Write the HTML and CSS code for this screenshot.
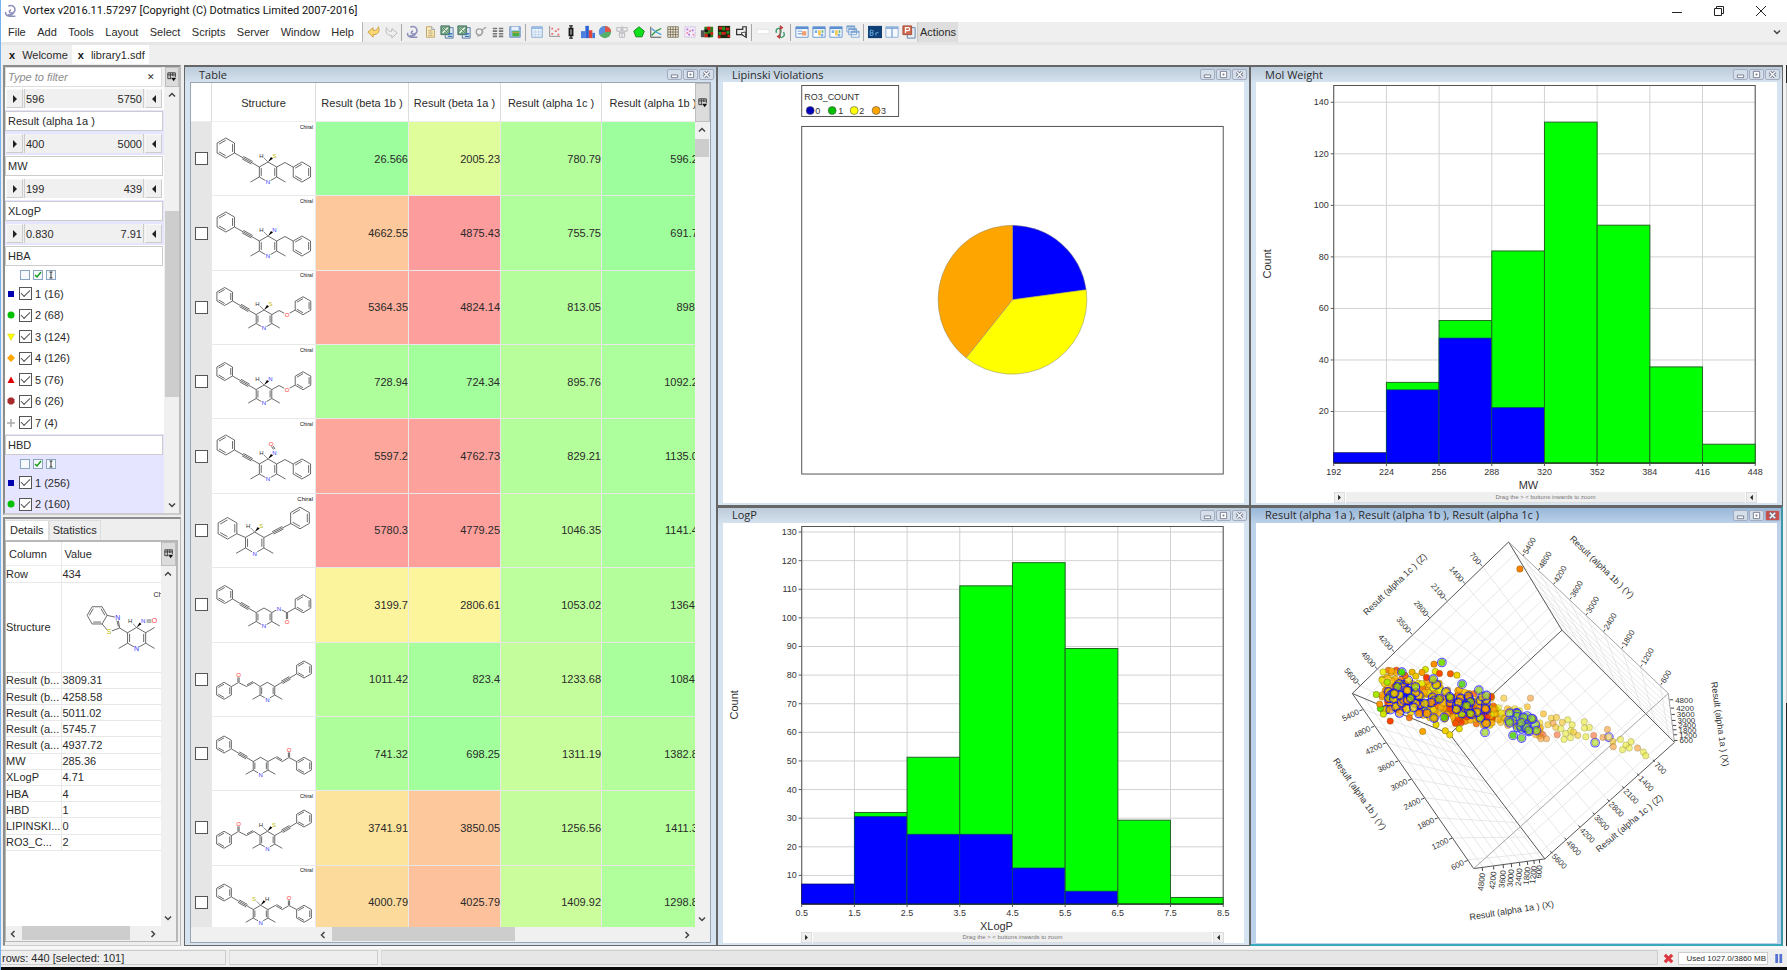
FILE: index.html
```html
<!DOCTYPE html>
<html lang="en">
<head>
<meta charset="utf-8">
<title>Vortex v2016.11.57297</title>
<link rel="stylesheet" href="styles.css">
</head>
<body>
<svg class="sprite" aria-hidden="true">
  <symbol id="i-vortex" viewBox="0 0 16 16"><path d="M5 2.500c4-2 8 .5 7.500 4.500-.3 3-3.500 4-5.500 3-1.500-1-1-3 1-3M2 9c-1 3 1.500 5 4 5h7M4 12c2 1 6 .5 7-2" fill="none" stroke="#8d90bd" stroke-width="1.800"/></symbol>
  <symbol id="i-undo" viewBox="0 0 16 16"><path d="M1 8l6-5v3c3 1 5-1 6-4 2 5 0 9-6 9v3z" fill="#fbd873" stroke="#c8973a"/></symbol>
  <symbol id="i-redo" viewBox="0 0 16 16"><path d="M15 9l-6-5v3c-3 1-5-1-6-4-2 5 0 9 6 9v3z" fill="#eee" stroke="#b5b5b5"/></symbol>
  <symbol id="i-doc" viewBox="0 0 16 16"><path d="M4 2h6l3 3v9H4z" fill="#fbeec2" stroke="#b79a5c"/><path d="M6 6h4M6 8h5M6 10h5M6 12h5" stroke="#c2a768"/><path d="M10 2v3h3" fill="#fff" stroke="#7a93b8"/></symbol>
  <symbol id="i-excel" viewBox="0 0 16 16"><path d="M6 3h9v12H6z" fill="#dfeaf5" stroke="#4b6f9c"/><path d="M1 1h10v10H1z" fill="#6f9f80" stroke="#3f6f5a"/><path d="M3 3l6 6M9 3L3 9" stroke="#fff" stroke-width="1.600"/><path d="M3 3l6 6" stroke="#2f7a37"/><path d="M9 10h5M9 13h5" stroke="#3e78b5" stroke-width="1.500"/></symbol>
  <symbol id="i-key" viewBox="0 0 16 16"><circle cx="6" cy="8" r="3.500" fill="none" stroke="#a0a0a0" stroke-width="1.500"/><path d="M9 6l4-3M12 3h2M4 13l4-2M9 8h2" stroke="#a0a0a0" stroke-width="1.400"/></symbol>
  <symbol id="i-cols" viewBox="0 0 16 16"><path d="M2 4h5M9 4h5M2 7h5M9 7h5M2 10h5M9 10h5M2 13h5M9 13h5" stroke="#777" stroke-width="1.800"/></symbol>
  <symbol id="i-save" viewBox="0 0 16 16"><path d="M2 2h12v12H2z" fill="#9dbfe8" stroke="#6c90c0"/><path d="M4 2h8v4H4z" fill="#e8f0fa"/><path d="M5 7h8v6H5z" fill="#4cae3f"/><path d="M5 8.500h8" stroke="#c9a54a"/></symbol>
  <symbol id="i-sheet" viewBox="0 0 16 16"><path d="M2 2h12v12H2z" fill="#edf4fc" stroke="#7ba2cf"/><path d="M2 3.500h12" stroke="#8db6e4" stroke-width="2"/><path d="M2 8h12M2 11h12M6 5v9M10 5v9" stroke="#bfd3ea"/></symbol>
  <symbol id="i-dots" viewBox="0 0 16 16"><path d="M3 1v12h12" fill="none" stroke="#888"/><path d="M5 3h2v2H5zM9 6h2v2H9zM5 9h2v2H5zM12 4h2v2h-2zM12 10h2v2h-2z" fill="#f06a6a"/></symbol>
  <symbol id="i-box" viewBox="0 0 16 16"><path d="M8 1v3M8 12v3M6 1h4M6 15h4" stroke="#111" stroke-width="1.300"/><path d="M6 4h4v8H6z" fill="#777" stroke="#111" stroke-width="1.500"/></symbol>
  <symbol id="i-hist" viewBox="0 0 16 16"><path d="M0 7h5v8H0z" fill="#4d7fe0"/><path d="M5 1h4v14H5z" fill="#2d64d2"/><path d="M9 6h4v9H9z" fill="#e2453a"/><path d="M13 9h3v6h-3z" fill="#3f78d8"/></symbol>
  <symbol id="i-pie" viewBox="0 0 16 16"><circle cx="8" cy="8" r="7" fill="#56b06a"/><path d="M8 8V1A7 7 0 0 0 2 11.600z" fill="#5b8de0"/><path d="M8 8V1a7 7 0 0 1 7 7z" fill="#e0584a"/></symbol>
  <symbol id="i-net" viewBox="0 0 16 16"><path d="M2 3h5v4H2zM9 3h5v4H9zM5 9h6v5H5zM4 7l3 3M12 7l-3 3M8 1v13" fill="none" stroke="#b4b4bc"/></symbol>
  <symbol id="i-penta" viewBox="0 0 16 16"><path d="M8 2l6 5-2.500 6.500h-7L2 7z" fill="#0fe01c" stroke="#0a7d12"/></symbol>
  <symbol id="i-line" viewBox="0 0 16 16"><path d="M2 2v12h12" fill="none" stroke="#444"/><path d="M3 12l5-5 6-3" fill="none" stroke="#2b9c41" stroke-width="1.500"/><path d="M3 4l5 4 6 3" fill="none" stroke="#4aa3d0" stroke-width="1.500"/></symbol>
  <symbol id="i-grid" viewBox="0 0 16 16"><path d="M2 2h12v12H2z" fill="#f4ecd8"/><path d="M2 2h12v12H2zM2 5h12M2 8h12M2 11h12M5 2v12M8 2v12M11 2v12" fill="none" stroke="#77705c"/></symbol>
  <symbol id="i-cloud" viewBox="0 0 16 16"><path d="M2 2h12v12H2z" fill="#f3eafa" stroke="#c9b8dc" stroke-dasharray="2 1"/><path d="M4 4h2v2H4zM10 5h2v2h-2zM6 10h2v2H6z" fill="#a879d8"/><path d="M7 6h2v2H7zM11 10h2v2h-2zM4 8h2v2H4z" fill="#ee8aa8"/></symbol>
  <symbol id="i-heat1" viewBox="0 0 16 16"><path d="M5 2h10v12H5z" fill="#2f7e1e"/><path d="M8 2h4v4H8zM12 8h3v3h-3zM5 10h4v4H5z" fill="#d32018"/><path d="M5 5h4v3H5zM9 10h3v4H9z" fill="#111"/><path d="M1 6h4v8H1z" fill="#555"/></symbol>
  <symbol id="i-heat2" viewBox="0 0 16 16"><path d="M1 1h14v14H1z" fill="#1d2a10"/><path d="M2 2h4v3H2zM10 3h4v3h-4zM5 8h5v3H5zM12 11h3v3h-3zM1 12h3v3H1z" fill="#d32018"/><path d="M6 2h3v4H6zM11 7h3v3h-3zM2 8h3v3H2z" fill="#2b9a22"/></symbol>
  <symbol id="i-sel" viewBox="0 0 16 16"><path d="M3 5h7V2h4v12l-5-3H3z" fill="none" stroke="#333" stroke-width="1.400"/><path d="M8 9l5 5V8z" fill="#fff" stroke="#333"/></symbol>
  <symbol id="i-blank" viewBox="0 0 16 16"><path d="M1 5h14v5H1z" fill="#fff" stroke="#e0e0e0"/></symbol>
  <symbol id="i-swap" viewBox="0 0 16 16"><path d="M4 9c-2-5 4-7 5-3s-2 4-1 7 7 0 4-5" fill="none" stroke="#3f9e6c" stroke-width="1.600"/><path d="M8 0l4 3-4 3zM8 16l-4-3 4-3z" fill="#c84040"/><path d="M8 1v14" stroke="#855"/></symbol>
  <symbol id="i-win1" viewBox="0 0 16 16"><path d="M1 2h14v12H1z" fill="#fff" stroke="#5b8fd0"/><path d="M1 3.500h14" stroke="#5b8fd0" stroke-width="2.500"/><path d="M3 7h5M3 10h5" stroke="#8ab0e0" stroke-width="1.500"/><path d="M8 7h5v5H8z" fill="#f0a070"/></symbol>
  <symbol id="i-win2" viewBox="0 0 16 16"><path d="M1 2h14v12H1z" fill="#fff" stroke="#5b8fd0"/><path d="M1 3.500h14" stroke="#5b8fd0" stroke-width="2.500"/><path d="M3 6h3v3H3zM10 10h3v3h-3z" fill="#7fb0ea"/><path d="M7 6h3v6H7z" fill="#f3c552"/><path d="M11 6h2v3h-2z" fill="#6ab36a"/></symbol>
  <symbol id="i-casc" viewBox="0 0 16 16"><path d="M1 1h9v7H1zM3 4h9v7H3zM6 7h9v7H6z" fill="#eef4fb" stroke="#7ba2cf"/><path d="M1 2h9M3 5h9M6 8h9" stroke="#7ba2cf" stroke-width="1.500"/></symbol>
  <symbol id="i-br" viewBox="0 0 16 16"><path d="M0 1h16v14H0z" fill="#0e3f75"/><path d="M2.500 6v6h2a1.500 1.500 0 0 0 0-3h-2M2.500 6h2a1.500 1.500 0 0 1 0 3M9 12V8.500M9 10q1-1.500 3-1.500" fill="none" stroke="#6fb0e8"/></symbol>
  <symbol id="i-two" viewBox="0 0 16 16"><path d="M1 2h7v12H1zM8 2h7v12H8z" fill="#f5f9fe" stroke="#84a9d6"/><path d="M1 3.500h14" stroke="#84a9d6" stroke-width="2"/></symbol>
  <symbol id="i-ppt" viewBox="0 0 16 16"><path d="M6 3h9v12H6z" fill="#e7edf5" stroke="#5a78a8"/><path d="M1 1h10v10H1z" fill="#d0694f" stroke="#a04a34"/><path d="M4 9V3h3a1.500 1.500 0 0 1 0 3.500H4" fill="none" stroke="#fff" stroke-width="1.400"/></symbol>
  <symbol id="i-cfg" viewBox="0 0 12 12"><path d="M1 1h9v5M1 1v7h4M1 3.500h9M4 1v7M7 1v4" fill="none" stroke="#222"/><path d="M5 7h6l-3 4z" fill="#111"/></symbol>
  <symbol id="i-up" viewBox="0 0 10 10"><path d="M2 6.500l3-3 3 3" fill="none" stroke="#444" stroke-width="1.500"/></symbol>
  <symbol id="i-down" viewBox="0 0 10 10"><path d="M2 3.500l3 3 3-3" fill="none" stroke="#444" stroke-width="1.500"/></symbol>
  <symbol id="i-left" viewBox="0 0 10 10"><path d="M6.500 2l-3 3 3 3" fill="none" stroke="#444" stroke-width="1.500"/></symbol>
  <symbol id="i-right" viewBox="0 0 10 10"><path d="M3.500 2l3 3-3 3" fill="none" stroke="#444" stroke-width="1.500"/></symbol>
  <symbol id="i-tri-r" viewBox="0 0 10 10"><path d="M3 1l4 4-4 4z" fill="#222"/></symbol>
  <symbol id="i-tri-l" viewBox="0 0 10 10"><path d="M7 1L3 5l4 4z" fill="#222"/></symbol>
  <symbol id="i-wmin" viewBox="0 0 14 10"><path d="M3.500 5.500h7v3h-7z" fill="#fff" stroke="#70778c"/></symbol>
  <symbol id="i-wmax" viewBox="0 0 14 10"><path d="M3.500 1.500h7v7h-7z" fill="#fff" stroke="#70778c"/><path d="M6 4h2v2H6z" fill="#70778c"/></symbol>
  <symbol id="i-wclose" viewBox="0 0 14 10"><path d="M4 2l6 6M10 2L4 8" stroke="#70778c" stroke-width="3.500"/><path d="M4 2l6 6M10 2L4 8" stroke="#fff" stroke-width="1.500"/></symbol>
</svg>

<header class="titlebar">
  <svg class="icon"><use href="#i-vortex"/></svg>
  <h1 class="app-name">Vortex v2016.11.57297 [Copyright (C) Dotmatics Limited 2007-2016]</h1>
  <div class="app-controls">
    <button class="app-btn" aria-label="Minimize"><svg viewBox="0 0 12 12"><path d="M1 7.500h10" stroke="#222"/></svg></button>
    <button class="app-btn" aria-label="Restore"><svg viewBox="0 0 12 12"><path d="M1.500 3.500h7v7h-7zM3.500 3.500v-2h7v7h-2" fill="none" stroke="#222"/></svg></button>
    <button class="app-btn" aria-label="Close"><svg viewBox="0 0 12 12"><path d="M1 1l10 10M11 1L1 11" stroke="#222"/></svg></button>
  </div>
</header>

<div class="menubar">
  <nav class="menus">
    <button>File</button><button>Add</button><button>Tools</button><button>Layout</button><button>Select</button><button>Scripts</button><button>Server</button><button>Window</button><button>Help</button>
  </nav>
  <div class="toolbar" id="toolbar"></div>
  <button class="actions">Actions</button>
  <div class="toolbar-rest"><svg class="mini"><use href="#i-down"/></svg></div>
</div>

<div class="tabs">
  <button class="tab"><b>x</b> Welcome</button>
  <button class="tab tab-on"><b>x</b> library1.sdf</button>
</div>

<main class="workspace">
  <aside class="side">
    <section class="panel filters">
      <div class="filter-top">
        <div class="search"><input type="text" placeholder="Type to filter" aria-label="Type to filter"><button aria-label="Clear filter">✕</button></div>
        <button class="cfg" aria-label="Configure"><svg class="mini12"><use href="#i-cfg"/></svg></button>
      </div>
      <div class="filter-main">
        <div class="filter-list" id="filters"></div>
        <div class="vscroll"><svg class="mini"><use href="#i-up"/></svg><div class="track filter-track"><div class="thumb"></div></div><svg class="mini"><use href="#i-down"/></svg></div>
      </div>
    </section>
    <section class="panel details">
      <div class="dtabs"><button class="dtab dtab-on">Details</button><button class="dtab">Statistics</button></div>
      <div class="dbox">
        <div class="dmain">
          <div class="dwrap">
          <table class="dtable">
            <thead><tr><th>Column</th><th>Value</th></tr></thead>
            <tbody>
              <tr><td>Row</td><td>434</td></tr>
              <tr class="dstruct"><td>Structure</td><td><svg id="detailMol" viewBox="0 0 100 88"></svg></td></tr>
              <tr><td>Result (b...</td><td>3809.31</td></tr>
              <tr><td>Result (b...</td><td>4258.58</td></tr>
              <tr><td>Result (a...</td><td>5011.02</td></tr>
              <tr><td>Result (a...</td><td>5745.7</td></tr>
              <tr><td>Result (a...</td><td>4937.72</td></tr>
              <tr><td>MW</td><td>285.36</td></tr>
              <tr><td>XLogP</td><td>4.71</td></tr>
              <tr><td>HBA</td><td>4</td></tr>
              <tr><td>HBD</td><td>1</td></tr>
              <tr><td>LIPINSKI...</td><td>0</td></tr>
              <tr><td>RO3_C...</td><td>2</td></tr>
            </tbody>
          </table>
          </div>
          <div class="vcol"><button class="cfg dcfg" aria-label="Configure columns"><svg class="mini12"><use href="#i-cfg"/></svg></button>
          <div class="vscroll"><svg class="mini"><use href="#i-up"/></svg><div class="track"></div><svg class="mini"><use href="#i-down"/></svg></div></div>
        </div>
        <div class="hscroll"><svg class="mini"><use href="#i-left"/></svg><div class="track dthumb"><div class="thumb"></div></div><svg class="mini"><use href="#i-right"/></svg></div>
      </div>
    </section>
  </aside>

  <div class="desktop">
    <section class="win win-table">
      <div class="win-title"><h2>Table</h2></div>
      <div class="win-body tbody-box">
        <div class="trow">
          <div class="twrap">
            <table class="grid">
              <colgroup><col class="c0"><col class="c1"><col class="c2"><col class="c3"><col class="c4"><col class="c5"></colgroup>
              <thead><tr><th></th><th>Structure</th><th>Result (beta 1b )</th><th>Result (beta 1a )</th><th>Result (alpha 1c )</th><th>Result (alpha 1b )</th></tr></thead>
              <tbody id="rows"></tbody>
            </table>
          </div>
          <div class="vcol"><button class="cfg tcfg" aria-label="Configure columns"><svg class="mini12"><use href="#i-cfg"/></svg></button>
          <div class="vscroll"><svg class="mini"><use href="#i-up"/></svg><div class="track tthumb"><div class="thumb"></div></div><svg class="mini"><use href="#i-down"/></svg></div></div>
        </div>
        <div class="hscroll thscroll"><svg class="mini"><use href="#i-left"/></svg><div class="track hthumb"><div class="thumb"></div></div><svg class="mini"><use href="#i-right"/></svg></div>
      </div>
    </section>
    <section class="win">
      <div class="win-title"><h2>Lipinski Violations</h2></div>
      <div class="win-body">
        <svg class="chart" viewBox="0 0 521 421">
          <rect x="78.500" y="3.500" width="97" height="31" class="frame"/>
          <text x="81" y="18" class="t9">RO3_COUNT</text>
          <g stroke="#555" stroke-width=".6"><circle cx="87" cy="28.500" r="4" fill="#0000b8"/><circle cx="109" cy="28.500" r="4" fill="#00c000"/><circle cx="131" cy="28.500" r="4" fill="#ff0"/><circle cx="153" cy="28.500" r="4" fill="#ffa500"/></g>
          <g class="t9"><text x="92" y="32">0</text><text x="115" y="32">1</text><text x="136" y="32">2</text><text x="158" y="32">3</text></g>
          <rect x="78.500" y="44.500" width="422" height="348" class="frame"/>
          <g stroke="#8a8a70" stroke-width=".5">
            <path d="M289.500 218V143.500A74.500 74.500 0 0 1 363.300 208z" fill="#00f"/>
            <path d="M289.500 218L363.300 208A74.500 74.500 0 0 1 243 276.200z" fill="#ff0"/>
            <path d="M289.500 218L243 276.200A74.500 74.500 0 0 1 289.500 143.500z" fill="#ffa500"/>
          </g>
        </svg>
      </div>
    </section>
    <section class="win">
      <div class="win-title"><h2>Mol Weight</h2></div>
      <div class="win-body">
        <svg class="chart" id="mw" viewBox="0 0 521 410"></svg>
        <div class="zoombar"><button aria-label="Lower bound"><svg class="mini"><use href="#i-tri-r"/></svg></button><span>Drag the &gt; &lt; buttons inwards to zoom</span><button aria-label="Upper bound"><svg class="mini"><use href="#i-tri-l"/></svg></button></div>
      </div>
    </section>
    <section class="win">
      <div class="win-title"><h2>LogP</h2></div>
      <div class="win-body">
        <svg class="chart" id="logp" viewBox="0 0 521 410"></svg>
        <div class="zoombar"><button aria-label="Lower bound"><svg class="mini"><use href="#i-tri-r"/></svg></button><span>Drag the &gt; &lt; buttons inwards to zoom</span><button aria-label="Upper bound"><svg class="mini"><use href="#i-tri-l"/></svg></button></div>
      </div>
    </section>
    <section class="win win-on">
      <div class="win-title"><h2>Result (alpha 1a ), Result (alpha 1b ), Result (alpha 1c )</h2></div>
      <div class="win-body"><svg class="chart" id="cube" viewBox="0 0 521 421"></svg></div>
    </section>
  </div>
  <div class="edge"></div>
</main>

<footer class="status">
  <span class="cell cell-a">rows: 440 [selected: 101]</span>
  <span class="cell cell-b"></span>
  <span class="cell cell-c"></span>
  <button class="stop" aria-label="Stop"><svg viewBox="0 0 12 12"><path d="M2 2l8 8M10 2L2 10" stroke="#dc3a42" stroke-width="3.500"/></svg></button>
  <span class="mem">Used 1027.0/3860 MB</span>
  <button class="stop" aria-label="Pause"><svg viewBox="0 0 12 12"><path d="M4 1v10M8.500 1v10" stroke="#5673d4" stroke-width="3"/></svg></button>
</footer>
<div class="taskline"></div>
<script src="app.js"></script>
</body>
</html>
```
FILE: styles.css
```css
* { box-sizing: border-box; }
body {
  margin: 0;
  height: 100vh;
  display: flex;
  flex-direction: column;
  overflow: hidden;
  background: #eee;
  border-left: 1px solid #74b2f2;
  font: 11px/14px "Liberation Sans", Arial, sans-serif;
  color: #2a2a2a;
}
button, input { font: inherit; color: inherit; margin: 0; padding: 0; border: 0; background: none; }
h1, h2 { margin: 0; font-weight: 400; }
.sprite { position: absolute; width: 0; height: 0; }
.icon { width: 14px; height: 14px; }
.mini { width: 10px; height: 10px; display: block; flex: none; }
.mini12 { width: 10px; height: 10px; display: block; }

.titlebar { flex: none; height: 22px; background: #fff; display: flex; align-items: center; gap: 5px; padding-left: 3px; }
.app-name { font: 11px/16px Roboto, sans-serif; color: #111; flex: 1; }
.app-controls { display: flex; gap: 30px; padding-right: 20px; }
.app-btn svg { width: 12px; height: 12px; display: block; }

.menubar { flex: none; height: 20px; background: #fff; display: flex; align-items: center; }
.menus { display: flex; justify-content: space-between; width: 361px; padding: 0 8px 0 7px; }
.toolbar { display: flex; align-items: center; height: 20px; background: #efefef; border-left: 1px solid #b5b5b5; padding-left: 2px; }
.toolbar button { width: 17px; height: 18px; display: flex; align-items: center; justify-content: center; }
.sep { width: 1px; height: 17px; margin: 0 2px; background: #a8a8a8; }
.actions { background: #dedede; height: 20px; padding: 0 2px; border-left: 1px solid #c8c8c8; }
.toolbar-rest { flex: 1; height: 20px; background: #efefef; display: flex; align-items: center; justify-content: flex-end; padding-right: 5px; }

.tabs { flex: none; height: 23px; border-top: 3px solid #e6e6e6; background: #efefef; display: flex; align-items: flex-end; padding: 0 2px 1px; }
.tab { height: 19px; padding: 0 4px 0 6px; display: flex; align-items: center; gap: 7px; }
.tab b { color: #111; }
.tab-on { background: #fff; }

.workspace { flex: 1; min-height: 0; display: flex; }
.side { flex: none; width: 183px; display: flex; flex-direction: column; gap: 2px; padding: 0 3px 0 2px; }
.panel { border: 2px solid #8d8d8d; border-right-color: #bbb; border-bottom-color: #ccc; min-height: 0; }
.filters { flex: 449; display: flex; flex-direction: column; background: #f0f0f0; }
.filter-top { display: flex; gap: 3px; height: 20px; flex: none; }
.search { flex: 1; min-width: 0; display: flex; background: #fff; border: 1px solid #ddd; }
.search input { flex: 1; min-width: 0; padding-left: 2px; outline: 0; }
.search input::placeholder { font-style: italic; color: #8c8c8c; }
.search button { flex: none; width: 20px; font-size: 9px; }
.cfg { flex: none; width: 14px; background: #dcdcdc; border: 1px solid #bdbdbd; display: flex; align-items: center; justify-content: center; }
.filter-main { flex: 1; min-height: 0; display: flex; }
.filter-list { flex: 1; min-width: 0; overflow: hidden; background: #fff; }
.vscroll { width: 14px; display: flex; flex-direction: column; align-items: center; padding: 3px 0; background: #f0f0f0; flex: 1; }
.filter-main .vscroll { flex: none; margin-left: 1px; }
.track { flex: 1; display: flex; align-self: stretch; }
.vscroll .track { flex-direction: column; }
.thumb { background: #cdcdcd; }
.filter-track { padding: 111px 0 0; }
.filter-track .thumb { height: 186px; }
.fgroup { padding: 1px 1px 1px 0; background: #fff; }
.fgroup-alt { background: #e5e5ff; }
.fname { display: block; width: 100%; height: 20px; background: #fff; border: 1px solid #ccc; padding: 0 2px; }
.range { display: flex; gap: 1px; margin: 3px 1px 1px; height: 19px; background: #f0f0f0; }
.fgroup:first-child .range { margin-top: 1px; }
.range button { width: 17px; display: flex; align-items: center; justify-content: center; border: 1px solid #f8f8f8; border-right-color: #ccc; border-bottom-color: #ccc; }
.range div { flex: 1; display: flex; justify-content: space-between; align-items: center; border-left: 1px solid #ccc; border-right: 1px solid #ccc; padding: 0 1px; }
.tri { display: flex; gap: 3px; padding: 4px 0 0 15px; height: 17px; }
.tri button { width: 10px; height: 10px; border: 1px solid #8aa5c0; background: #f5f9fc; display: flex; align-items: center; justify-content: center; }
.tri svg { width: 8px; height: 8px; display: block; }
.opt { display: flex; align-items: center; height: 21px; padding-left: 1px; }
.opt:nth-child(even) { height: 22px; }
.opt svg { width: 10px; height: 10px; margin-right: 3px; }
.opt input, .grid input { appearance: none; width: 13px; height: 13px; border: 1px solid #555; background: #fff; display: grid; place-items: center; margin-right: 3px; }
.opt input:checked::after { content: ""; width: 8px; height: 4px; border: solid #555; border-width: 0 0 1px 1px; transform: rotate(-45deg) translate(1px, -1px); }

.details { flex: 429; display: flex; flex-direction: column; border-width: 2px 1px 1px 2px; }
.dtabs { display: flex; height: 21px; align-items: flex-end; }
.dtab { height: 20px; padding: 0 3px; border: 1px solid #ddd; border-bottom: 0; }
.dtab-on { background: #fff; padding: 0 4px; }
.dbox { flex: 1; min-height: 0; display: flex; flex-direction: column; border: 1px solid #b8b8b8; border-width: 2px 2px 1px 1px; background: #fff; margin: 0 2px 3px 0; }
.dmain { flex: 1; min-height: 0; display: flex; }
.dwrap { flex: 1; min-width: 0; overflow: hidden; }
.dtable { border-collapse: collapse; table-layout: fixed; width: 100%; height: 309px; }
.dtable th { font-weight: 400; text-align: left; height: 24px; padding: 0 3px; border-bottom: 1px solid #eee; }
.dtable th:first-child { width: 55px; }
.dtable td { padding: 0; height: 16px; border-bottom: 1px solid #e8e8e8; white-space: nowrap; }
.dtable td + td { padding-left: 1px; }
.dtable td + td, .dtable th + th { border-left: 1px solid #e8e8e8; }
.dtable .dstruct td { height: 89px; }
.dtable .dstruct td + td { padding: 0; }
.dtable svg { display: block; width: 100%; height: 88px; }
.vcol { width: 15px; display: flex; flex-direction: column; align-items: stretch; background: #f0f0f0; flex: none; }
.dcfg { height: 24px; width: 15px; }
.hscroll { flex: none; height: 15px; display: flex; align-items: center; background: #f0f0f0; padding: 0 18px 0 2px; }
.hscroll .track { height: 14px; }
.dthumb { padding-left: 4px; }
.dthumb .thumb { width: 108px; }

.desktop { flex: 1; min-width: 0; display: grid; grid-template-columns: repeat(3, 1fr); grid-template-rows: 1fr 1fr; }
.win { min-width: 0; min-height: 0; display: flex; flex-direction: column; border: 1px solid #666; border-width: 2px 1px 1px; padding: 0 5px 2px; background: linear-gradient(#bccbda, #d6e3f0 16px); }
.win-on { background: linear-gradient(#98b7d8, #bdd2ea 16px); border-bottom: 2px solid #3aa9bd; border-right: 2px solid #3d98a8; padding-bottom: 1px; padding-right: 4px; }
.win-table { grid-row: span 2; }
.win-title { flex: none; height: 15px; display: flex; align-items: center; padding: 0 0 0 9px; }
.win-title h2 { flex: 1; font: 11px/14px "Open Sans", sans-serif; white-space: nowrap; }
.wbtns { display: flex; gap: 1px; margin-right: -3px; }
.wbtns button { width: 15px; height: 11px; border: 1px solid #a4acc0; border-radius: 2px; background: #d5dfea; display: flex; align-items: center; justify-content: center; }
.wbtns svg { width: 13px; height: 9px; }
.win-on .wbtns button:last-child { background: #c9504c; }
.win-body { flex: 1; min-height: 0; display: flex; flex-direction: column; background: #fff; }
.chart { flex: 1; min-height: 0; width: 100%; display: block; font-family: "Liberation Sans", Arial, sans-serif; }
.frame { fill: none; stroke: #555; }
.t9 { font-size: 9px; fill: #333; }
.t11 { font-size: 11px; fill: #333; }
.t8 { font-size: 8px; fill: #333; }
.zoombar { flex: none; height: 11px; margin: 0 20px 0 78px; display: flex; gap: 1px; }
.zoombar button { width: 11px; background: #f0f0f0; border: 1px solid #ddd; display: flex; align-items: center; justify-content: center; }
.zoombar button svg { width: 7px; height: 7px; }
.zoombar span { flex: 1; background: #efefef; border-bottom: 1px solid #ddd; text-align: center; font-size: 6px; line-height: 11px; color: #777; }

.tbody-box { border: 1px solid #9aa5b2; }
.trow { flex: 1; min-height: 0; display: flex; }
.twrap { flex: 1; min-width: 0; overflow: hidden; background: #fff; }
.grid { border-collapse: separate; border-spacing: 0; table-layout: fixed; width: 514px; height: 857px; }
.c0 { width: 21px; } .c1 { width: 104px; } .c2 { width: 93px; } .c3 { width: 92px; } .c4 { width: 101px; } .c5 { width: 103px; }
.grid th { height: 39px; font-weight: 400; padding: 2px 0 0; border-right: 1px solid #ddd; border-bottom: 1px solid #eee; white-space: nowrap; }
.grid td { padding: 0; border-right: 1px solid #e8e8e8; border-bottom: 1px solid #e8e8e8; text-align: right; }
.grid td:first-child { background: #e6e6e6; }
.grid input { margin: 0 0 0 4px; }
.grid svg { display: block; width: 103px; height: 72px; }
.tcfg { height: 39px; width: 15px; }
.tthumb { padding-top: 4px; }
.tthumb .thumb { height: 18px; }
.thscroll { padding: 0 18px 0 127px; }
.hthumb { padding-left: 4px; }
.hthumb .thumb { width: 183px; }
.edge { width: 4px; flex: none; background: linear-gradient(#222 18px, #ccc 18px 638px, #222 638px) right / 1px 100% no-repeat #f2f2f2; }

.status { flex: none; height: 21px; display: flex; align-items: flex-end; gap: 3px; padding: 0 2px 2px 0; border-top: 3px solid #f8f8f8; }
.cell { height: 15px; border: 1px solid #ccc; background: #eee; border-left-color: #ddd; }
.cell-a { width: 225px; padding-left: 1px; line-height: 14px; border-left: 0; }
.cell-b { width: 149px; }
.cell-c { flex: 1; background: #e6e6e6; }
.stop { width: 14px; height: 14px; }
.stop svg { width: 11px; height: 11px; display: block; margin: auto; }
.mem { width: 90px; height: 13px; background: #fff; border: 1px solid #ccc; font-size: 8px; line-height: 12px; text-align: right; padding-right: 1px; }
.taskline { flex: none; height: 3px; background: #0a0a0a; }
```
FILE: app.js
```js
const $ = id => document.getElementById(id);

/* Toolbar */
const tools = ["undo", "redo", "|", "vortex", "doc", "excel", "excel", "key", "cols", "save", "|", "sheet", "dots", "box", "hist", "pie", "net", "penta", "line", "grid", "cloud", "heat1", "heat2", "sel", "|", "blank", "swap", "|", "win1", "win2", "win2", "casc", "|", "br", "two", "ppt"];
$("toolbar").innerHTML = tools.map(t => t === "|" ? '<span class="sep"></span>'
  : `<button aria-label="${t}"><svg class="icon"><use href="#i-${t}"/></svg></button>`).join("");

/* Window buttons */
document.querySelectorAll(".win-title").forEach(t => t.insertAdjacentHTML("beforeend",
  '<div class="wbtns">' + [["Minimize", "wmin"], ["Maximize", "wmax"], ["Close", "wclose"]]
    .map(([l, i]) => `<button aria-label="${l}"><svg><use href="#i-${i}"/></svg></button>`).join("") + "</div>"));

/* Filters */
const marks = [
  '<path d="M2 2h6v6H2z" fill="#0000b0"/>', '<circle cx="5" cy="5" r="3.500" fill="#00c000"/>',
  '<path d="M1.500 2h7L5 8.500z" fill="#ff0" stroke="#bb0" stroke-width=".4"/>', '<path d="M5 1l4 4-4 4-4-4z" fill="#ffa500"/>',
  '<path d="M1.500 8h7L5 1.500z" fill="#e00000"/>', '<path d="M3.500 1.500h3l2 2v3l-2 2h-3l-2-2v-3z" fill="#a52a2a"/>', '<path d="M5 1v8M1 5h8" stroke="#aaa" stroke-width="1.500"/>'];
const filters = [
  { range: ["596", "5750"] },
  { name: "Result (alpha 1a )", range: ["400", "5000"], alt: 1 },
  { name: "MW", range: ["199", "439"] },
  { name: "XLogP", range: ["0.830", "7.91"], alt: 1 },
  { name: "HBA", opts: ["1 (16)", "2 (68)", "3 (124)", "4 (126)", "5 (76)", "6 (26)", "7 (4)"] },
  { name: "HBD", opts: ["1 (256)", "2 (160)"], alt: 1 }];
$("filters").innerHTML = filters.map(f => `<div class="fgroup${f.alt ? " fgroup-alt" : ""}">` +
  (f.name ? `<input class="fname" aria-label="Filter name" value="${f.name}">` : "") +
  (f.range ? `<div class="range"><button aria-label="Lower"><svg class="mini"><use href="#i-tri-r"/></svg></button><div><span>${f.range[0]}</span><span>${f.range[1]}</span></div><button aria-label="Upper"><svg class="mini"><use href="#i-tri-l"/></svg></button></div>` : "") +
  (f.opts ? '<div class="tri"><button aria-label="None"></button><button aria-label="All"><svg viewBox="0 0 8 8"><path d="M1 4l2 2 4-5" fill="none" stroke="#1a9a1a" stroke-width="1.500"/></svg></button><button aria-label="Invert"><svg viewBox="0 0 8 8"><path d="M4 1v6M2.500 1h3M2.500 7h3" stroke="#333"/></svg></button></div><div class="opts">' +
    f.opts.map((o, i) => `<label class="opt"><svg viewBox="0 0 10 10">${marks[i]}</svg><input type="checkbox" checked>${o}</label>`).join("") + "</div>" : "") + "</div>").join("");

/* Molecules */
const ln = (a, b, w = 0.8) => `<path d="M${a}L${b}" stroke="#444" stroke-width="${w}"/>`;
const atom = (x, y, s, size = 6) => `<circle cx="${x}" cy="${y}" r="3" fill="#fff"/><text x="${x}" y="${y + 2.2}" font-size="${size}" text-anchor="middle" fill="${{ N: "#33f", O: "#f33", S: "#bb0", H: "#333" }[s]}">${s}</text>`;
const verts = (cx, cy, r, off = -90) => [0, 1, 2, 3, 4, 5].map(i => {
  const a = (off + i * 60) * Math.PI / 180;
  return [cx + r * Math.cos(a), cy + r * Math.sin(a)];
});
const ring = (cx, cy, r, dbl = [1, 3, 5], off = -90) => {
  const v = verts(cx, cy, r, off), u = verts(cx, cy, r * 0.78, off);
  return v.map((p, i) => ln(p, v[(i + 1) % 6])).join("") + dbl.map(i => ln(u[i], u[(i + 1) % 6])).join("");
};
const triple = (a, b) => {
  const m = t => [a[0] + (b[0] - a[0]) * t, a[1] + (b[1] - a[1]) * t];
  const l = Math.hypot(b[0] - a[0], b[1] - a[1]), nx = -(b[1] - a[1]) / l * 1.4, ny = (b[0] - a[0]) / l * 1.4;
  const p = m(0.33), q = m(0.7);
  return ln(a, b) + ln([p[0] + nx, p[1] + ny], [q[0] + nx, q[1] + ny]) + ln([p[0] - nx, p[1] - ny], [q[0] - nx, q[1] - ny]);
};
const core = (x, y, r) => ring(x, y, r, [1, 4]) + ln([x - r * 0.87, y + r / 2], [x - r * 1.75, y + r]) +
  ln([x + r * 0.87, y + r / 2], [x + r * 1.75, y + r]) + atom(x, y + r, "N");
const stereo = (x, y, l, r) => ln([x, y], [x - 4, y - 4], 0.6) + `<path d="M${x} ${y}l3-5 2 1.500z" fill="#000"/>` + atom(x - 6.5, y - 6.5, l) + atom(x + 6.5, y - 6.5, r);
const chiral = (s = 5) => `<text x="101" y="${s + 1}" font-size="${s}" text-anchor="end" fill="#111">Chiral</text>`;
const benzyl = x => chiral() + ring(13.8, 25, 10) + triple([22.5, 30], [47.5, 44]) + core(56, 49, 10) +
  ln([64.7, 44], [73, 39.500]) + ln([73, 39.500], [81, 44]) + ring(89.9, 49, 10) + stereo(56, 39, "H", x);
const ether = x => chiral() + ring(12.7, 25.500, 9) + triple([20.5, 30], [44, 43.500]) + core(52, 48, 9) +
  ln([60, 43.500], [67, 39.500]) + ln([67, 39.500], [75, 43.700]) + ln([75, 43.700], [83, 39.200]) + atom(75, 43.7, "O") + ring(91, 34.7, 9) + stereo(52, 39, "H", x);
const enoneL = ring(12, 47.8, 8.5) + ln([19.5, 43.500], [26.5, 39.500]) + ln([25.9, 39], [25.9, 33]) + ln([27.1, 39], [27.1, 33]) + atom(26.5, 31.5, "O") +
  ln([26.5, 39.500], [34.4, 43.500]) + ln([34.4, 43.500], [42, 39.500]) + ln([35, 41.800], [41, 38.500]) + ln([42, 39.500], [48, 43.500]) +
  core(55.4, 47.8, 8.5) + triple([62.8, 43.5], [84.5, 31]) + ring(92, 26.5, 8.5);
const enoneR = ring(12, 26.5, 8.5) + triple([19.5, 31], [41.3, 43.5]) + core(48.6, 47.8, 8.5) + ln([56, 43.500], [63.4, 39.500]) +
  ln([63.4, 39.500], [70.2, 43.500]) + ln([64.5, 38.500], [70, 41.800]) + ln([70.2, 43.500], [77, 39.500]) + ln([76.4, 39], [76.4, 33]) + ln([77.6, 39], [77.6, 33]) +
  atom(77, 31.5, "O") + ln([77, 39.500], [84.5, 43.500]) + ring(92, 47.8, 8.5);
const mols = [
  benzyl("S"), benzyl("N"), ether("S"), ether("N"),
  benzyl("N") + ln([61.5, 29.500], [59.2, 26]) + ln([63, 29], [60.7, 25.500]) + atom(59, 23.5, "O"),
  chiral(6) + ring(15.5, 34.3, 10.8) + ln([24.8, 39.700], [33.5, 43.500]) + core(42.7, 48.7, 10.6) + triple([52, 43.5], [79, 29.5]) + ring(88, 24, 10.8) + stereo(42.7, 38, "H", "S"),
  ring(12.7, 25.5, 9) + triple([20.5, 30], [44, 43.5]) + core(52, 48, 9) + ln([60, 43.500], [67, 39.500]) + ln([67, 39.500], [75, 43.700]) + atom(67, 39.5, "N") +
    ln([74.4, 44], [74.4, 51]) + ln([75.6, 44], [75.6, 51]) + atom(75, 53, "O") + ln([75, 43.700], [83, 39.200]) + ring(91, 34.7, 9),
  enoneL, enoneR, chiral() + enoneL + stereo(55.4, 39.3, "H", "S"), chiral() + enoneR + stereo(48.6, 39.3, "S", "H")];

/* Data rows: value and heat colour for each result column */
const rows = [
  ["26.566", "#9cfe9c", "2005.23", "#e0fd9c", "780.79", "#b4fe9c", "596.25", "#9cfe9c"],
  ["4662.55", "#fdc89c", "4875.43", "#fd9c9c", "755.75", "#b0fe9c", "691.72", "#9ffe9c"],
  ["5364.35", "#fdae9c", "4824.14", "#fd9f9c", "813.05", "#b4fe9c", "898.5", "#a4fe9c"],
  ["728.94", "#aeff9c", "724.34", "#a2ff9c", "895.76", "#b8ff9c", "1092.25", "#acff9c"],
  ["5597.2", "#fda69c", "4762.73", "#fda19c", "829.21", "#b4ff9c", "1135.05", "#acff9c"],
  ["5780.3", "#fd9f9c", "4779.25", "#fda09c", "1046.35", "#bcff9c", "1141.45", "#acff9c"],
  ["3199.7", "#fcf49c", "2806.61", "#fcf59c", "1053.02", "#bcff9c", "1364.5", "#b4ff9c"],
  ["1011.42", "#b8ff9c", "823.4", "#a6ff9c", "1233.68", "#c4fe9c", "1084.5", "#a9ff9c"],
  ["741.32", "#aeff9c", "698.25", "#a1ff9c", "1311.19", "#c8fe9c", "1382.85", "#b4ff9c"],
  ["3741.91", "#fde49c", "3850.05", "#fdc89c", "1256.56", "#c4fe9c", "1411.35", "#b6ff9c"],
  ["4000.79", "#fbda9c", "4025.79", "#fdc29c", "1409.92", "#ccfd9c", "1298.85", "#b0ff9c"]];
$("rows").innerHTML = rows.map((r, i) => `<tr><td><input type="checkbox" aria-label="Select row ${i + 1}"></td><td><svg viewBox="0 0 103 72">${mols[i]}</svg></td>` +
  [0, 2, 4, 6].map(k => `<td style="background:${r[k + 1]}">${r[k]}</td>`).join("") + "</tr>").join("");

$("detailMol").innerHTML = ring(35.3, 32.3, 10, [1, 3, 5], 0) + ln([45.3, 32.300], [56, 34.700]) + ln([40.3, 41], [47.3, 49]) +
  ln([47.3, 49], [58, 45]) + ln([58, 45], [56, 34.700]) + ln([56.7, 43.500], [54.8, 36]) + atom(56, 34.7, "N", 7) + atom(47.3, 49, "S", 7) +
  ln([58, 45], [66, 50]) + ring(75, 55, 10.5, [1, 4]) + ln([66, 60.200], [57, 65.500]) + ln([84, 60.200], [93, 65.500]) + ln([84, 49.800], [93, 44.500]) + atom(75, 65.5, "N", 7) +
  stereo(75, 44.5, "H", "N") + ln([85, 37], [90, 37]) + ln([85, 39], [90, 39]) + atom(93, 38, "O", 7) + '<text x="92" y="14" font-size="7" fill="#222">Chiral</text>';

/* Histograms */
function histogram(id, o) {
  const x0 = o.x, w = 422, top = 3.5, base = 381.5, step = w / o.bars.length, y = v => base - v * o.unit;
  let s = "";
  o.yTicks.forEach(v => s += `<path d="M${x0} ${y(v)}h${w}" stroke="#d2d2d2"/>`);
  o.xTicks.forEach((v, i) => s += `<path d="M${x0 + i * step} ${top}V${base}" stroke="#d2d2d2"/>`);
  s += `<rect x="${x0}" y="${top}" width="${w}" height="${base - top}" class="frame"/>`;
  o.bars.forEach(([g, b], i) => {
    const x = x0 + i * step;
    if (g) s += `<rect x="${x}" y="${y(g)}" width="${step}" height="${base - y(g)}" fill="#0f0" stroke="#262"/>`;
    if (b) s += `<rect x="${x}" y="${y(b)}" width="${step}" height="${base - y(b)}" fill="#00f" stroke="${g ? "#046" : "#005"}" stroke-width=".7"/>`;
  });
  s += `<path d="M${x0} ${base}h${w}" stroke="#222"/>`;
  o.yTicks.forEach(v => s += `<path d="M${x0 - 3} ${y(v)}h3" stroke="#555"/><text class="t9" x="${x0 - 5}" y="${y(v) + 3}" text-anchor="end">${v}</text>`);
  o.xTicks.forEach((v, i) => s += `<path d="M${x0 + i * step} ${base}v3" stroke="#555"/><text class="t9" x="${x0 + i * step}" y="393" text-anchor="middle">${v}</text>`);
  s += `<text class="t11" x="${x0 + 195}" y="408" text-anchor="middle">${o.label}</text>`;
  s += '<text class="t11" transform="translate(15 182) rotate(-90)" text-anchor="middle">Count</text>';
  $(id).innerHTML = s;
}
const steps = (from, to, by) => Array.from({ length: Math.round((to - from) / by) + 1 }, (_, i) => from + i * by);
histogram("mw", { x: 77.5, unit: 2.58, label: "MW", yTicks: steps(20, 140, 20), xTicks: steps(192, 448, 32),
  bars: [[0, 4], [31.300, 28.400], [55.300, 48.500], [82.300, 21.500], [132.300, 0], [92.300, 0], [37.300, 0], [7.300, 0]] });
histogram("logp", { x: 78.5, unit: 2.865, label: "XLogP", yTicks: steps(10, 130, 10), xTicks: steps(0.5, 8.5, 1),
  bars: [[0, 7], [32, 30.600], [51.300, 24.400], [111.200, 24.400], [119.300, 12.600], [89.300, 4.500], [29.300, 0], [2.300, 0]] });

/* 3D scatter: model coordinates are projected to chart pixels by P */
const P = (x, y) => [x / 2.92 - 6, y / 3 - 22];
const V = { A: [755, 123], B: [298, 578], C: [911, 388], D: [583, 700], E: [1240, 725], F: [653, 1104], G: [861, 1075], H: [1222, 578] };
const at = (a, b, t) => [V[a][0] + (V[b][0] - V[a][0]) * t, V[a][1] + (V[b][1] - V[a][1]) * t];
const edge = (a, b, c) => `<path d="M${P(...V[a])}L${P(...V[b])}" stroke="${c}"/>`;
const tz = [0.165, 0.28, 0.395, 0.505, 0.617, 0.732, 0.84, 0.95];
const ty = [0.09, 0.185, 0.28, 0.38, 0.485, 0.595, 0.71, 0.825, 0.95];
const tx = [0.13, 0.28, 0.42, 0.54, 0.65, 0.75, 0.85, 0.95];
const mesh = (a, b, c, d, ts) => ts.map(t => `<path d="M${P(...at(a, b, t))}L${P(...at(c, d, t))}" stroke="#e2e2e2" stroke-width=".8"/>`).join("");
let cube = mesh("A", "B", "C", "D", tz) + mesh("A", "C", "B", "D", tx) + mesh("C", "D", "E", "G", tz) + mesh("C", "E", "D", "G", ty) +
  mesh("A", "H", "C", "E", ty) + mesh("A", "C", "H", "E", tx) + mesh("B", "F", "D", "G", ty) + mesh("B", "D", "F", "G", tx);
cube += ["AB", "AC", "CD", "BD", "CE", "DG", "BF", "FG", "GE"].map(e => edge(e[0], e[1], "#555")).join("") +
  ["AH", "HE", "HF"].map(e => edge(e[0], e[1], "#a5a5a5")).join("");
const label = (x, y, rot, txt, anchor, cls = "t8") => `<text class="${cls}" text-anchor="${anchor}" transform="translate(${P(x, y)}) rotate(${rot})" y="3">${txt}</text>`;
const axis = (pts, from, by, rot, anchor, dx, dy, mx, my) => pts.map(([x, y], i) =>
  `<path d="M${P(x, y)}L${P(x + mx, y + my)}" stroke="#444"/>` + label(x + dx, y + dy, rot, from + by * i, anchor)).join("");
cube += axis([[678, 195], [627, 247], [574, 298], [524, 350], [473, 400], [420, 452], [370, 503], [320, 553]], 700, 700, 50, "end", -7, -8, -6, -6);
cube += axis([[1183, 783], [1137, 825], [1093, 863], [1050, 902], [1007, 942], [965, 980], [925, 1018], [883, 1058]], 700, 700, 46, "start", 3, 4, -6, -6);
cube += axis([[797, 165], [843, 207], [887, 250], [935, 295], [982, 342], [1033, 392], [1086, 443], [1142, 497], [1200, 552]], 5400, -600, -60, "start", 5, -8, 4, -6);
cube += axis([[328, 627], [362, 677], [396, 727], [432, 781], [470, 836], [508, 893], [548, 952], [590, 1013], [635, 1080]], 5400, -600, -26, "end", -12, 4, -9, 3);
cube += axis([[1226, 597], [1229, 622], [1231, 641], [1233, 659], [1235, 674], [1236, 687], [1238, 702], [1239, 719]], 4800, -600, 0, "start", 16, 0, 10, 0);
cube += axis([[678, 1101], [711, 1097], [739, 1093], [763, 1090], [787, 1087], [810, 1083], [829, 1080], [845, 1078]], 4800, -600, -84, "end", 0, 16, 1, 10);
cube += label(423, 250, -44, "Result (alpha 1c ) (Z)", "middle", "t9") + label(1028, 198, 44, "Result (alpha 1b ) (Y)", "middle", "t9") +
  label(1373, 670, 82, "Result (alpha 1a ) (X)", "middle", "t9") + label(1108, 968, -40, "Result (alpha 1c ) (Z)", "middle", "t9") +
  label(320, 880, 55, "Result (alpha 1b ) (Y)", "middle", "t9") + label(764, 1230, -9, "Result (alpha 1a ) (X)", "middle", "t9");

let seed = 7;
const rnd = () => (seed = (seed * 16807) % 2147483647) / 2147483647;
const dot = (x, y, fill, o = 1, ringed = 0) => {
  const [px, py] = P(x, y);
  return (ringed ? `<circle cx="${px}" cy="${py}" r="4.300" fill="none" stroke="${ringed}" stroke-width="1.100" opacity=".85"/>` : "") +
    `<circle cx="${px}" cy="${py}" r="3.200" fill="${fill}" stroke="#665500" stroke-width=".4" opacity="${o}"/>`;
};
const pal = ["#ffb400", "#ffa000", "#f0d800", "#e8f000", "#ffb000", "#ff6a00", "#ff3a00", "#ffc400"];
for (let i = 0; i < 290; i++) {
  const u = rnd(), x = 385 + 335 * u, mid = 572 + 62 * u, spread = 72 - 26 * u;
  cube += dot(x, mid + (rnd() + rnd() - 1) * spread * 1.1, pal[Math.floor(rnd() * 8)], 0.85);
}
for (let i = 0; i < 40; i++) {
  const u = rnd();
  cube += dot(710 + 150 * u, 620 + 55 * u + (rnd() - 0.5) * 80, pal[Math.floor(rnd() * 5)], 0.6);
}
for (let i = 0; i < 76; i++) {
  const u = rnd(), x = 395 + 300 * u;
  cube += dot(x, 582 + 45 * u + (rnd() + rnd() - 1) * 58, ["#a0d800", "#e8d000", "#ffc000", "#ffa000"][Math.floor(rnd() * 4)], 0.75, "#11f");
}
for (let i = 0; i < 24; i++) {
  const u = rnd();
  cube += dot(740 + 105 * u, 630 + 35 * u + (rnd() - 0.3) * 55, "#8fd840", 0.7, "#33f");
}
[[788, 204, "#ff8000"], [537, 490, "#ff9000"], [585, 519, "#ff5a00"], [604, 523, "#f0d800"], [512, 506, "#d8e800"], [409, 661, "#ff4000"], [504, 692, "#ffa500"], [583, 702, "#f0d800"], [570, 690, "#f0d000"], [611, 684, "#e8e000"], [368, 581, "#a8e800"], [380, 623, "#60e000"], [378, 610, "#ff9500"], [389, 640, "#d0e800"], [473, 514, "#f0b800"], [484, 526, "#f0c800"], [502, 515, "#ffa000"], [541, 512, "#e8e800"], [553, 518, "#ff4a00"], [515, 530, "#ff3a00"], [452, 524, "#ff7000"], [543, 672, "#e8d800"], [600, 668, "#ff5000"]]
  .forEach(([x, y, c]) => cube += dot(x, y, c));
[[560, 485, "#70e000"], [443, 514, "#30e000"], [619, 550, "#50d820"], [668, 568, "#a0d840"], [686, 695, "#b0e050"], [768, 704, "#50d820"], [793, 712, "#80e040"], [1008, 726, "#c8e860"], [1048, 709, "#f0d890"], [567, 650, "#50d000"], [535, 535, "#a8d020"], [690, 584, "#a8d050"], [537, 652, "#e0c000"]]
  .forEach(([x, y, c]) => cube += dot(x, y, c, 0.9, "#33f"));
cube += dot(400, 544, "#a8e800", 1, "#ffc860");
[[819, 592, 1], [741, 592, 0], [880, 652, 0], [895, 650, 0], [885, 668, 1], [870, 672, 0], [893, 680, 0], [928, 657, 2], [941, 672, 2], [976, 663, 2], [991, 680, 2], [977, 682, 2], [908, 684, 2], [922, 698, 2], [937, 690, 2], [897, 702, 3], [856, 702, 3], [850, 714, 1], [866, 714, 1], [917, 716, 2], [936, 711, 2], [957, 704, 0], [981, 708, 2], [1004, 704, 3], [1031, 710, 1], [1044, 686, 1], [1060, 722, 0], [1082, 716, 2], [1061, 738, 1], [1113, 723, 2], [1098, 733, 2], [1088, 747, 2], [1108, 742, 2], [1132, 742, 1], [1149, 754, 2], [1156, 765, 2], [945, 694, 0], [912, 665, 0]]
  .forEach(([x, y, k]) => cube += dot(x, y, ["#f5c830", "#f8a040", "#e8ec40", "#f87040"][k], 0.65));
$("cube").innerHTML = cube;
```
